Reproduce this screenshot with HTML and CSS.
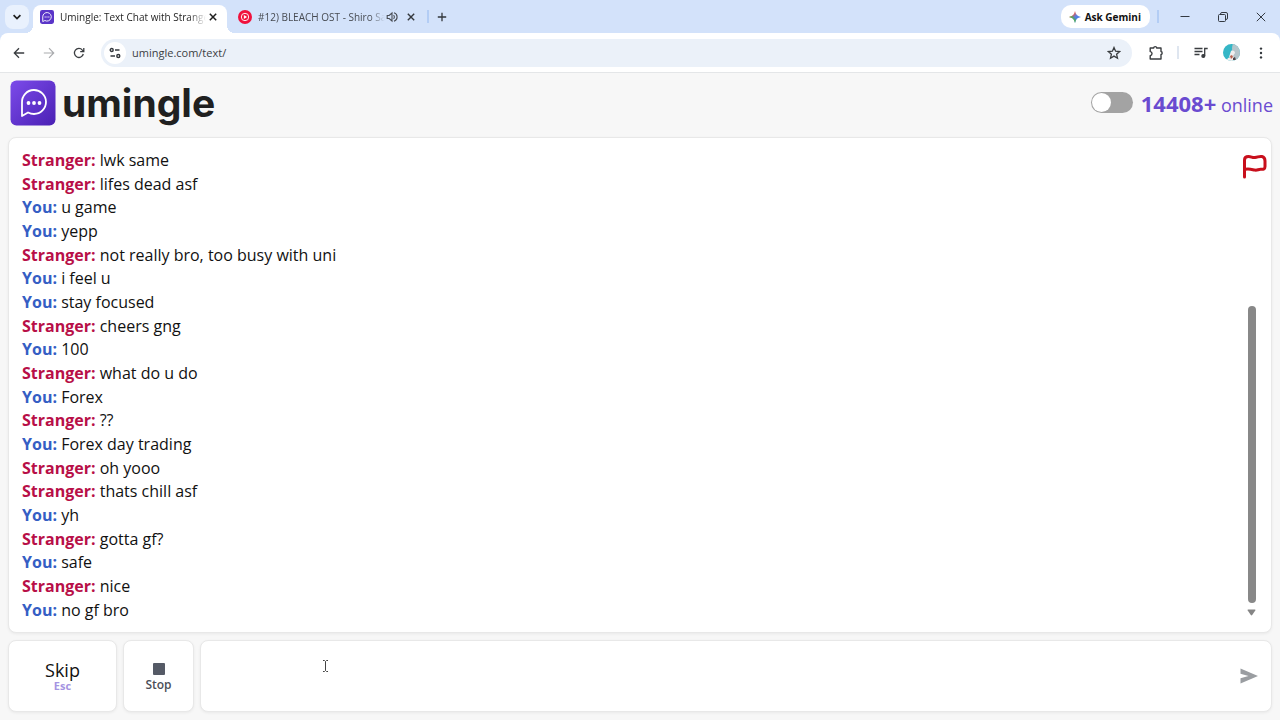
FILE: index.html
```
<!DOCTYPE html>
<html lang="en">
<head>
    <meta charset="UTF-8">
    <meta name="viewport" content="width=device-width, initial-scale=1.0">
    <title>Umingle: Text Chat with Strangers</title>
    <link rel="stylesheet" href="styles.css">
</head>
<body>
    <!-- Browser tabs -->
    <div class="tab-strip">
        <button class="tab-search" aria-label="Search tabs">
            <svg width="10" height="10" viewBox="0 0 10 10" fill="none" stroke="#1f1f1f" stroke-width="1.7"><path d="M1.6 3.2 5 6.6l3.4-3.4"/></svg>
        </button>
        <div class="tab active">
            <svg class="favicon" width="14" height="14" viewBox="0 0 46 46">
                <rect width="46" height="46" rx="7" fill="#5a35c8"/>
                <path d="M9 38V22.500a14 14 0 1 1 7 12z" fill="none" stroke="#fff" stroke-width="3" stroke-linejoin="round"/>
                <path d="M15 23h16" stroke="#fff" stroke-width="3" stroke-dasharray="4 2"/>
            </svg>
            <span class="tab-title">Umingle: Text Chat with Strange</span>
            <button class="icon-button" aria-label="Close tab">
                <svg width="10" height="10" viewBox="0 0 10 10" stroke="#1f1f1f" stroke-width="1.5"><path d="M1.800 1.800l6.400 6.400M8.200 1.800L1.800 8.200"/></svg>
            </button>
        </div>
        <div class="tab">
            <svg class="favicon" width="14" height="14" viewBox="0 0 14 14">
                <circle cx="7" cy="7" r="7" fill="#f0103c"/>
                <circle cx="7" cy="7" r="3.700" fill="none" stroke="#fff" stroke-width=".9"/>
                <path d="M5.900 5v4l3.200-2z" fill="#fff"/>
            </svg>
            <span class="tab-title">#12) BLEACH OST - Shiro Sa</span>
            <button class="icon-button" aria-label="Mute tab">
                <svg width="12" height="12" viewBox="0 0 12 12" fill="none" stroke="#474b52" stroke-width="1.100"><path d="M1.200 4.500h2l2.800-2.500v8L3.200 7.500h-2zM7.500 4.200a2.300 2.300 0 0 1 0 3.600M8 1.800a4.400 4.400 0 0 1 0 8.400"/></svg>
            </button>
            <button class="icon-button close" aria-label="Close tab">
                <svg width="10" height="10" viewBox="0 0 10 10" stroke="#33373c" stroke-width="1.4"><path d="M1.800 1.800l6.400 6.400M8.200 1.800L1.800 8.200"/></svg>
            </button>
        </div>
        <span class="strip-divider"></span>
        <button class="icon-button new-tab" aria-label="New tab">
            <svg width="10" height="10" viewBox="0 0 10 10" stroke="#33373c" stroke-width="1.300"><path d="M5 .8v8.400M.8 5h8.400"/></svg>
        </button>
        <div class="window-controls">
            <button class="gemini">
                <svg width="12" height="12" viewBox="0 0 12 12">
                    <defs>
                        <linearGradient id="spark" x1="0" y1="0" x2="1" y2="1">
                            <stop offset=".3" stop-color="#e5584b"/>
                            <stop offset=".5" stop-color="#5b80e0"/>
                            <stop offset=".8" stop-color="#3a79e8"/>
                        </linearGradient>
                        <linearGradient id="sparkLow" x1="1" y1="0" x2="0" y2="1">
                            <stop offset=".5" stop-color="#3b9a63" stop-opacity="0"/>
                            <stop offset=".65" stop-color="#53b34e"/>
                        </linearGradient>
                    </defs>
                    <path d="M6 0C6.600 3.600 8.400 5.400 12 6 8.400 6.600 6.600 8.400 6 12 5.400 8.400 3.600 6.600 0 6 3.600 5.400 5.400 3.600 6 0z" fill="url(#spark)"/>
                    <path d="M6 0C6.600 3.600 8.400 5.400 12 6 8.400 6.600 6.600 8.400 6 12 5.400 8.400 3.600 6.600 0 6 3.600 5.400 5.400 3.600 6 0z" fill="url(#sparkLow)"/>
                </svg>
                Ask Gemini
            </button>
            <span class="strip-divider"></span>
            <button class="window-button" aria-label="Minimize">
                <svg width="10" height="10" viewBox="0 0 10 10" stroke="#333941"><path d="M.5 4.500h9"/></svg>
            </button>
            <button class="window-button" aria-label="Restore">
                <svg width="10" height="10" viewBox="0 0 10 10" fill="none" stroke="#333941"><rect x=".5" y="2.500" width="7" height="7" rx="1"/><path d="M2.500 2.500V2A1.500 1.500 0 0 1 4 .5h4A1.500 1.500 0 0 1 9.500 2v4A1.500 1.500 0 0 1 8 7.500h-.5"/></svg>
            </button>
            <button class="window-button" aria-label="Close">
                <svg width="10" height="10" viewBox="0 0 10 10" stroke="#333941"><path d="M.8.8l8.400 8.400M9.200.8L.8 9.200"/></svg>
            </button>
        </div>
    </div>

    <!-- Address bar -->
    <div class="toolbar">
        <button class="nav-button" aria-label="Back">
            <svg width="12" height="12" viewBox="0 0 12 12" fill="none" stroke="#3a3d40" stroke-width="1.300"><path d="M11.200 6H1.500M6 1.200 1.300 6 6 10.800"/></svg>
        </button>
        <button class="nav-button" aria-label="Forward">
            <svg width="12" height="12" viewBox="0 0 12 12" fill="none" stroke="#a9abae" stroke-width="1.200"><path d="M.8 6h9.700M6 1.200 10.700 6 6 10.800"/></svg>
        </button>
        <button class="nav-button" aria-label="Reload">
            <svg width="12" height="12" viewBox="0 0 12 12" fill="none" stroke="#3a3d40" stroke-width="1.300"><path d="M10.300 7A4.500 4.500 0 1 1 9.400 3.100L10.600 4.400M10.800.9v3.700H7.200"/></svg>
        </button>
        <div class="address">
            <button class="site-info" aria-label="Site information">
                <svg width="12" height="12" viewBox="0 0 12 12" fill="none" stroke="#33373c" stroke-width="1.400"><circle cx="2.700" cy="3" r="1.500"/><path d="M6 3h4.500M1.500 9H6"/><circle cx="9.300" cy="9" r="1.500"/></svg>
            </button>
            <input class="url" type="text" value="umingle.com/text/" aria-label="Address">
            <button class="icon-button" aria-label="Bookmark">
                <svg width="14" height="14" viewBox="0 0 14 14" fill="none" stroke="#3a3d40" stroke-width="1.300"><path d="M7 1.500l1.600 3.700 4 .4-3 2.700.9 3.900L7 10.100l-3.500 2.100.9-3.900-3-2.700 4-.4z"/></svg>
            </button>
        </div>
        <div class="toolbar-actions">
            <button class="nav-button" aria-label="Extensions">
                <svg width="16" height="16" viewBox="0 0 16 16" fill="none" stroke="#3a3d40" stroke-width="1.400" stroke-linejoin="round"><path d="M2.200 3h3.500C5.500 1.200 8.900 1.200 8.700 3H13v3.500c1.500 0 1.500 3.200 0 3V14H2.200v-3.400c2.400-.2 2.400-3.800 0-4z"/></svg>
            </button>
            <span class="toolbar-divider"></span>
            <button class="nav-button" aria-label="Media controls">
                <svg width="14" height="14" viewBox="0 0 14 14" fill="none" stroke="#3a3d40" stroke-width="1.300"><path d="M.5 2.500h8M.5 5.500h8M.5 8.500h5M10.700 10V2.500h3"/><circle cx="9.300" cy="10" r="1.400" fill="#3a3d40"/></svg>
            </button>
            <button class="nav-button" aria-label="Profile">
                <svg width="17" height="17" viewBox="0 0 17 17">
                    <clipPath id="avatar"><circle cx="8.500" cy="8.500" r="8.500"/></clipPath>
                    <g clip-path="url(#avatar)">
                        <rect width="17" height="17" fill="#35b6c6"/>
                        <path d="M10 0c-2 4 0 8-1 12l2 5h6V0z" fill="#b5c5cb"/>
                        <path d="M8 7c2-1 4 0 4 2l-2 3-4 1zM5 14l5-2 3 5H3z" fill="#f0eeee"/>
                        <path d="M7 12l2-1 1 2-2 2z" fill="#b9604e"/>
                        <path d="M10 14l2-1 1 3h-3z" fill="#51464b"/>
                    </g>
                </svg>
            </button>
            <button class="nav-button" aria-label="Menu">
                <svg width="12" height="12" viewBox="0 0 12 12" fill="#33373c"><circle cx="6" cy="1.600" r="1.200"/><circle cx="6" cy="6" r="1.200"/><circle cx="6" cy="10.400" r="1.200"/></svg>
            </button>
        </div>
    </div>

    <div class="page">
        <header class="header">
            <a class="brand" href="#">
                <svg width="46" height="46" viewBox="0 0 46 46">
                    <defs>
                        <linearGradient id="logo" x1="0" y1="0" x2="1" y2="1">
                            <stop offset="0" stop-color="#7c4bea"/>
                            <stop offset="1" stop-color="#4a20b4"/>
                        </linearGradient>
                    </defs>
                    <rect x=".5" y=".5" width="45" height="45" rx="6" fill="url(#logo)"/>
                    <path d="M12 36V22.500a12 12 0 1 1 12 11.500c-2.500 0-4.300-.6-6-1.500z" fill="none" stroke="#fff" stroke-width="1.800" stroke-linejoin="round"/>
                    <g fill="#fff"><circle cx="18.500" cy="23" r="1.900"/><circle cx="24" cy="23" r="1.900"/><circle cx="29.500" cy="23" r="1.900"/></g>
                </svg>
                <span class="brand-name">umingle</span>
            </a>
            <div class="online">
                <input class="switch" type="checkbox" aria-label="Dark mode">
                <span><b class="online-count">14408+</b> online</span>
            </div>
        </header>

        <main class="chat">
            <ul class="messages">
                <li><b class="stranger">Stranger:</b> lwk same</li>
                <li><b class="stranger">Stranger:</b> lifes dead asf</li>
                <li><b class="you">You:</b> u game</li>
                <li><b class="you">You:</b> yepp</li>
                <li><b class="stranger">Stranger:</b> not really bro, too busy with uni</li>
                <li><b class="you">You:</b> i feel u</li>
                <li><b class="you">You:</b> stay focused</li>
                <li><b class="stranger">Stranger:</b> cheers gng</li>
                <li><b class="you">You:</b> 100</li>
                <li><b class="stranger">Stranger:</b> what do u do</li>
                <li><b class="you">You:</b> Forex</li>
                <li><b class="stranger">Stranger:</b> ??</li>
                <li><b class="you">You:</b> Forex day trading</li>
                <li><b class="stranger">Stranger:</b> oh yooo</li>
                <li><b class="stranger">Stranger:</b> thats chill asf</li>
                <li><b class="you">You:</b> yh</li>
                <li><b class="stranger">Stranger:</b> gotta gf?</li>
                <li><b class="you">You:</b> safe</li>
                <li><b class="stranger">Stranger:</b> nice</li>
                <li><b class="you">You:</b> no gf bro</li>
            </ul>
            <div class="side">
                <button class="report" aria-label="Report">
                    <svg width="26" height="26" viewBox="0 0 26 26" fill="none" stroke="#c80f1c" stroke-width="3" stroke-linecap="round" stroke-linejoin="round"><path d="M3.500 24V7C3.500 4.500 5 3.500 7.500 3.500c3 0 3.500 1.300 6.500 1 3-.3 4-1.500 7-1 2.500.5 3 2 3 4.500v5.500c0 2.500-1.500 3-4 2.800-2.500-.2-3.500 1.200-6 .8-3-.5-5-1.600-10-.8"/></svg>
                </button>
                <div class="scrollbar">
                    <span class="thumb"></span>
                    <svg width="9" height="7" viewBox="0 0 9 7" fill="#858585"><path d="M1.200.5h6.600q1 0 .5.900L5.200 6q-.7.800-1.400 0L.7 1.400Q.2.500 1.200.5z"/></svg>
                </div>
            </div>
        </main>

        <form class="controls">
            <button type="button" class="card skip">Skip<small>Esc</small></button>
            <button type="button" class="card stop"><span class="stop-icon"></span>Stop</button>
            <div class="card compose">
                <textarea class="message-input" aria-label="Message"></textarea>
                <button class="send" type="submit" aria-label="Send">
                    <svg width="18" height="16" viewBox="0 0 18 16" fill="#9a9da1"><path d="M.5.5 18 8 .5 15.500V10.300L8.500 8 .5 5.700z"/></svg>
                </button>
                <svg class="text-cursor" width="7" height="12" viewBox="0 0 7 12" fill="none" stroke="#444"><path d="M1 .5h1.500l1 1 1-1H6M3.500 1.500v9M1 11.500h1.500l1-1 1 1H6"/></svg>
            </div>
        </form>
    </div>
</body>
</html>
```
FILE: styles.css
```
* {
    box-sizing: border-box;
}

body {
    display: flex;
    flex-direction: column;
    min-height: 100vh;
    margin: 0;
    font-family: "Open Sans", "Noto Sans", sans-serif;
    background: #d3e2fa;
    color: #111;
}

button, input, textarea {
    margin: 0;
    padding: 0;
    border: none;
    background: none;
    color: inherit;
    font-family: inherit;
}

svg {
    display: block;
    flex: none;
}

/* Browser tabs */
.tab-strip {
    display: flex;
    align-items: center;
    height: 33px;
    padding-left: 5px;
}

.tab-search {
    display: grid;
    place-items: center;
    width: 24px;
    height: 24px;
    margin-right: 4px;
    border-radius: 8px;
    background: #e9f1fd;
}

.tab {
    display: flex;
    align-items: center;
    width: 200px;
    height: 28px;
    padding: 0 9px 0 11px;
    font-size: 10px;
    color: #474b52;
}

.tab.active {
    position: relative;
    align-self: flex-end;
    width: 194px;
    padding: 0 7px 4px;
    border-radius: 8px 8px 0 0;
    background: white;
    color: #1f1f1f;
}

/* curved feet of the active tab */
.tab.active::before,
.tab.active::after {
    content: "";
    position: absolute;
    bottom: 0;
    width: 8px;
    height: 8px;
}

.tab.active::before {
    right: 100%;
    background: radial-gradient(circle at 0 0, transparent 8px, white 8px);
}

.tab.active::after {
    left: 100%;
    background: radial-gradient(circle at 100% 0, transparent 8px, white 8px);
}

.tab-title {
    flex: 1;
    margin-left: 6px;
    overflow: hidden;
    white-space: nowrap;
    -webkit-mask-image: linear-gradient(to right, black 88%, transparent);
    mask-image: linear-gradient(to right, black 88%, transparent);
}

.tab .close {
    margin-left: 5px;
}

.icon-button {
    display: grid;
    place-items: center;
    min-width: 14px;
    height: 16px;
}

.strip-divider {
    width: 2px;
    height: 13px;
    background: #b3cdf5;
}

.new-tab {
    margin-left: 6px;
}

.window-controls {
    display: flex;
    align-items: center;
    margin-left: auto;
}

.gemini {
    display: flex;
    align-items: center;
    gap: 4px;
    height: 23px;
    margin-right: 7px;
    padding: 0 9px 0 8px;
    border-radius: 10px;
    background: white;
    font-size: 10px;
    font-weight: 700;
}

.window-button {
    display: grid;
    place-items: center;
    width: 38px;
    height: 32px;
}

.window-controls .strip-divider {
    margin-right: 7px;
}

/* Address bar */
.toolbar {
    display: flex;
    align-items: center;
    height: 40px;
    padding: 0 7px;
    border-bottom: 1px solid #e4e6e8;
    border-radius: 8px 8px 0 0;
    background: white;
}

.nav-button {
    display: grid;
    place-items: center;
    width: 24px;
    height: 24px;
    margin-right: 6px;
}

.address {
    display: flex;
    flex: 1;
    align-items: center;
    gap: 6px;
    height: 28px;
    margin-left: 4px;
    padding: 0 11px 0 3px;
    border-radius: 14px;
    background: #ebf1f9;
}

.site-info {
    display: grid;
    place-items: center;
    width: 22px;
    height: 22px;
    border-radius: 50%;
    background: white;
}

.url {
    flex: 1;
    font-size: 11px;
    color: #3c4043;
}

.toolbar-actions {
    display: flex;
    align-items: center;
    margin-left: 12px;
}

.toolbar-actions .nav-button:last-child {
    margin-right: 0;
}

.toolbar-divider {
    width: 2px;
    height: 13px;
    margin: 0 10px 0 3px;
    background: #dfe6f0;
}

/* Page */
.page {
    display: flex;
    flex: 1;
    flex-direction: column;
    padding: 0 8px 8px;
    background: #f7f7f7;
}

.header {
    display: flex;
    align-items: center;
    justify-content: space-between;
    height: 64px;
    padding: 0 0 5px 2px;
}

.brand {
    display: flex;
    align-items: center;
    gap: 6px;
    color: #202020;
    text-decoration: none;
}

.brand-name {
    font-family: "Inter", sans-serif;
    font-size: 39px;
    font-weight: 700;
    line-height: 46px;
}

.online {
    display: flex;
    align-items: center;
    gap: 8px;
    margin-right: -1px;
    color: #6a4bd0;
    font-size: 18px;
}

.online-count {
    font-size: 22px;
}

.switch {
    display: flex;
    align-items: center;
    appearance: none;
    width: 42px;
    height: 21px;
    padding: 1px;
    border-radius: 11px;
    background: #a3a3a3;
}

.switch::before {
    content: "";
    width: 19px;
    height: 19px;
    border-radius: 50%;
    background: white;
}

.switch:checked {
    justify-content: flex-end;
    background: #6a4bd0;
}

.chat,
.card {
    border: 1px solid #e8e8e8;
    border-radius: 8px;
    background: white;
    box-shadow: 0 1px 3px rgba(0, 0, 0, 0.06);
}

.chat {
    display: flex;
    flex: 1;
}

.messages {
    display: flex;
    flex: 1;
    flex-direction: column;
    justify-content: space-between;
    margin: 0;
    padding: 11px 13px 10px;
    list-style: none;
    font-size: 16px;
    line-height: 23px;
}

.stranger {
    color: #b80f47;
}

.you {
    color: #355ec4;
}

.side {
    display: flex;
    flex-direction: column;
    align-items: flex-end;
    padding: 15px 4px 16px 0;
}

.report {
    width: 26px;
    height: 26px;
}

.scrollbar {
    display: flex;
    flex: 1;
    flex-direction: column;
    justify-content: flex-end;
    align-items: center;
    gap: 6px;
    margin-right: 11px;
}

.thumb {
    width: 8px;
    height: 68%;
    border-radius: 4px;
    background: #888;
}

/* Bottom controls */
.controls {
    display: flex;
    gap: 6px;
    height: 72px;
    margin-top: 7px;
}

.skip,
.stop {
    display: flex;
    flex-direction: column;
    align-items: center;
    justify-content: center;
}

.skip {
    width: 109px;
    font-size: 18px;
    line-height: 20px;
}

.skip small {
    color: #a594e2;
    font-size: 11px;
    font-weight: 700;
    line-height: 12px;
}

.stop {
    gap: 2px;
    width: 71px;
    padding-top: 4px;
    color: #4b4f58;
    font-size: 12px;
    font-weight: 600;
    line-height: 16px;
}

.stop-icon {
    width: 12px;
    height: 12px;
    border-radius: 1px;
    background: #555a66;
}

.compose {
    position: relative;
    display: flex;
    flex: 1;
    align-items: center;
    padding-right: 13px;
}

.message-input {
    flex: 1;
    height: 100%;
    padding: 12px;
    resize: none;
    outline: none;
    font-size: 16px;
}

.text-cursor {
    position: absolute;
    top: 19px;
    left: 121px;
}
```
